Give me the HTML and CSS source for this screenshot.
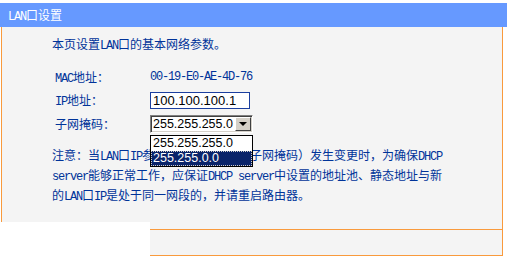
FILE: index.html
```html
<!DOCTYPE html>
<html lang="zh-CN">
<head>
    <meta charset="UTF-8">
    <title>LAN口设置</title>
    <link rel="stylesheet" href="styles.css">
</head>
<body>
    <div class="page">
        <div class="title"><span class="en">LAN</span>口设置</div>
        <div class="panel">
            <div class="content">
                <p class="intro">本页设置<span class="en">LAN</span>口的基本网络参数。</p>
                <div class="form">
                    <div class="label"><span class="en">MAC</span>地址：</div>
                    <div class="value en">00-19-E0-AE-4D-76</div>

                    <div class="label"><span class="en">IP</span>地址：</div>
                    <div class="value"><input type="text" class="ip" value="100.100.100.1"></div>

                    <div class="label">子网掩码：</div>
                    <div class="value">
                        <div class="select">
                            <span class="select-text">255.255.255.0</span>
                            <span class="select-btn"><span class="arrow"></span></span>
                            <!-- opened list -->
                            <ul class="options">
                                <li>255.255.255.0</li>
                                <li class="selected">255.255.0.0</li>
                            </ul>
                        </div>
                    </div>
                </div>
                <p class="note">注意：当<span class="en">LAN</span>口<span class="en">IP</span>参数（包括<span class="en">IP</span>地址和子网掩码）发生变更时，为确保<span class="en">DHCP</span><br><span class="en">server</span>能够正常工作，应保证<span class="en">DHCP server</span>中设置的地址池、静态地址与新<br>的<span class="en">LAN</span>口<span class="en">IP</span>是处于同一网段的，并请重启路由器。</p>
            </div>
            <div class="footer"></div>
        </div>
    </div>
    <div class="cover"></div>
</body>
</html>
```

FILE: styles.css
```css
body {
  margin: 0;
  background-color: #fff;
  font-family: "Noto Sans CJK SC", "Liberation Sans", sans-serif;
  font-size: 12px;
  color: #003399;
}

/* latin text in the old bitmap font is 6px wide, mono */
.en {
  font-family: "Liberation Mono", monospace;
  font-size: 12px;
  letter-spacing: -1.2px;
}

.page {
  padding-top: 3px;
}

.title {
  height: 24px;
  line-height: 24px;
  padding-left: 8px;
  background-color: #6699ff;
  color: #fff;
}

.panel {
  margin-left: 1px;
  width: 500px;
  border-left: 1px solid #f99a3c;
  border-right: 1px solid #f99a3c;
  background-color: #f4f4f4;
}

.content {
  height: 202px;
  padding-left: 50px;
  box-sizing: border-box;
  padding-top: 8px;
}

.intro {
  margin: 0;
  line-height: 18px;
}

.form {
  display: grid;
  grid-template-columns: 95px auto;
  grid-auto-rows: 23px;
  align-items: center;
  margin: 11px 0 0 3px;
}

.label,
.value {
  line-height: 23px;
}

.value {
  display: flex;
  align-items: center;
}

.ip {
  width: 100px;
  height: 17px;
  box-sizing: border-box;
  border: 1px solid #1c3f9f;
  padding: 0 2px;
  margin: 0;
  font-family: "Liberation Sans", sans-serif;
  font-size: 13px;
  color: #000;
  background-color: #fff;
}

.select {
  position: relative;
  width: 103px;
  height: 18px;
  box-sizing: border-box;
  border-top: 1px solid #808080;
  border-left: 1px solid #808080;
  border-right: 1px solid #fff;
  border-bottom: 1px solid #fff;
  box-shadow: inset 1px 1px 0 #404040, inset -1px -1px 0 #d4d0c8;
  background-color: #fff;
  display: flex;
  align-items: center;
  padding: 1px;
}

.select-text {
  flex: 1;
  overflow: hidden;
  white-space: nowrap;
  padding-left: 1px;
  font-family: "Liberation Sans", sans-serif;
  font-size: 12.5px;
  line-height: 14px;
  color: #000;
}

.select-btn {
  flex: none;
  width: 16px;
  height: 14px;
  box-sizing: border-box;
  background-color: #d4d0c8;
  border-top: 1px solid #fff;
  border-left: 1px solid #fff;
  border-right: 1px solid #404040;
  border-bottom: 1px solid #404040;
  display: flex;
  justify-content: center;
  align-items: center;
}

.arrow {
  width: 0;
  height: 0;
  border-left: 4px solid transparent;
  border-right: 4px solid transparent;
  border-top: 4px solid #000;
  margin-top: 1px;
}

.options {
  position: absolute;
  left: -1px;
  top: 19px;
  width: 103px;
  margin: 0;
  padding: 0;
  list-style: none;
  border: 1px solid #000;
  background-color: #fff;
  z-index: 2;
  box-sizing: border-box;
}

.options li {
  height: 15px;
  line-height: 15px;
  padding-left: 2px;
  font-family: "Liberation Sans", sans-serif;
  font-size: 12.5px;
  color: #000;
}

.options li.selected {
  background-color: #0a246a;
  color: #fff;
  outline: 1px dotted #d4d0c8;
  outline-offset: -1px;
}

.note {
  margin: 11px 0 0 0;
  line-height: 18px;
}

.footer {
  height: 25px;
  border-top: 1px solid #f99a3c;
  border-bottom: 1px solid #f99a3c;
}

.cover {
  position: absolute;
  left: 0;
  top: 222px;
  width: 150px;
  height: 36px;
  background-color: #fff;
}
```
